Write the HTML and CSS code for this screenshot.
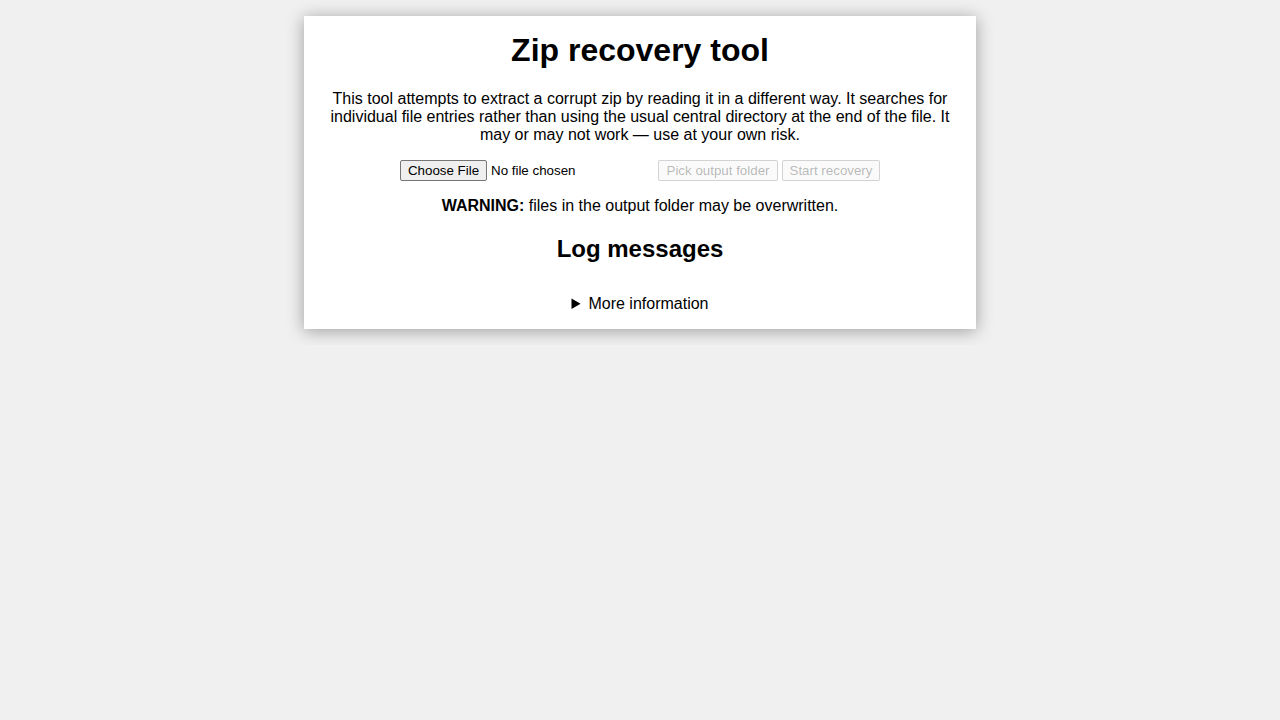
FILE: index.html
```html
<!DOCTYPE html>
<html lang="en">
<head>
<meta charset="utf-8">
<title>Zip recovery tool</title>
<link rel="stylesheet" href="styles.css">
</head>
<body>
<main class="card">
  <h1 class="title">Zip recovery tool</h1>
  <p class="intro">This tool attempts to extract a corrupt zip by reading it in a different way. It searches for individual file entries rather than using the usual central directory at the end of the file. It may or may not work — use at your own risk.</p>
  <div class="controls">
    <input class="file-input" type="file" accept=".zip">
    <button class="btn btn-pick" type="button" disabled>Pick output folder</button>
    <button class="btn btn-start" type="button" disabled>Start recovery</button>
  </div>
  <p class="warning"><strong>WARNING:</strong> files in the output folder may be overwritten.</p>
  <h2 class="log-title">Log messages</h2>
  <div class="log"></div>
  <details class="info">
    <summary>More information</summary>
    <p>The recovered files are written to the chosen folder.</p>
  </details>
</main>
</body>
</html>
```

FILE: styles.css
```css
html, body {
  margin: 0;
  background: #f0f0f0;
}

body {
  font-family: "Liberation Sans", Arial, sans-serif;
  font-size: 16px;
  color: #000;
}

.card {
  display: flow-root;
  width: 624px;
  margin: 16px auto;
  padding: 0 24px;
  background: #fff;
  box-shadow: 0 2px 16px rgba(0, 0, 0, 0.35);
  text-align: center;
}

.title {
  font-size: 32px;
  font-weight: bold;
  margin: 15.6px 0 21.4px;
}

.intro {
  margin: 0;
}

.controls {
  display: flex;
  justify-content: center;
  align-items: center;
  gap: 4px;
  height: 21px;
  margin: 16px 0 16.5px;
}

.file-input {
  width: 254px;
  height: 21px;
  padding: 0;
  font-family: "Liberation Sans", Arial, sans-serif;
  font-size: 13.333px;
  color: #000;
  text-align: left;
}

.file-input::file-selector-button,
.btn {
  box-sizing: border-box;
  height: 21px;
  padding: 0;
  font-family: "Liberation Sans", Arial, sans-serif;
  font-size: 13.333px;
  color: #000;
  background: #efefef;
  border: 1px solid #767676;
  border-radius: 2px;
  text-align: center;
}

.file-input::file-selector-button {
  width: 87px;
  margin: 0 4px 0 0;
}

.btn-pick {
  width: 120px;
}

.btn-start {
  width: 98px;
}

.btn:disabled {
  color: rgba(16, 16, 16, 0.3);
  background: rgba(239, 239, 239, 0.3);
  border-color: rgba(118, 118, 118, 0.3);
}

.warning {
  margin: 0;
}

.log-title {
  font-size: 24px;
  font-weight: bold;
  margin: 19.9px 0;
}

.info {
  margin: 31.6px 0 15.6px;
}

.info summary {
  cursor: pointer;
}
```
